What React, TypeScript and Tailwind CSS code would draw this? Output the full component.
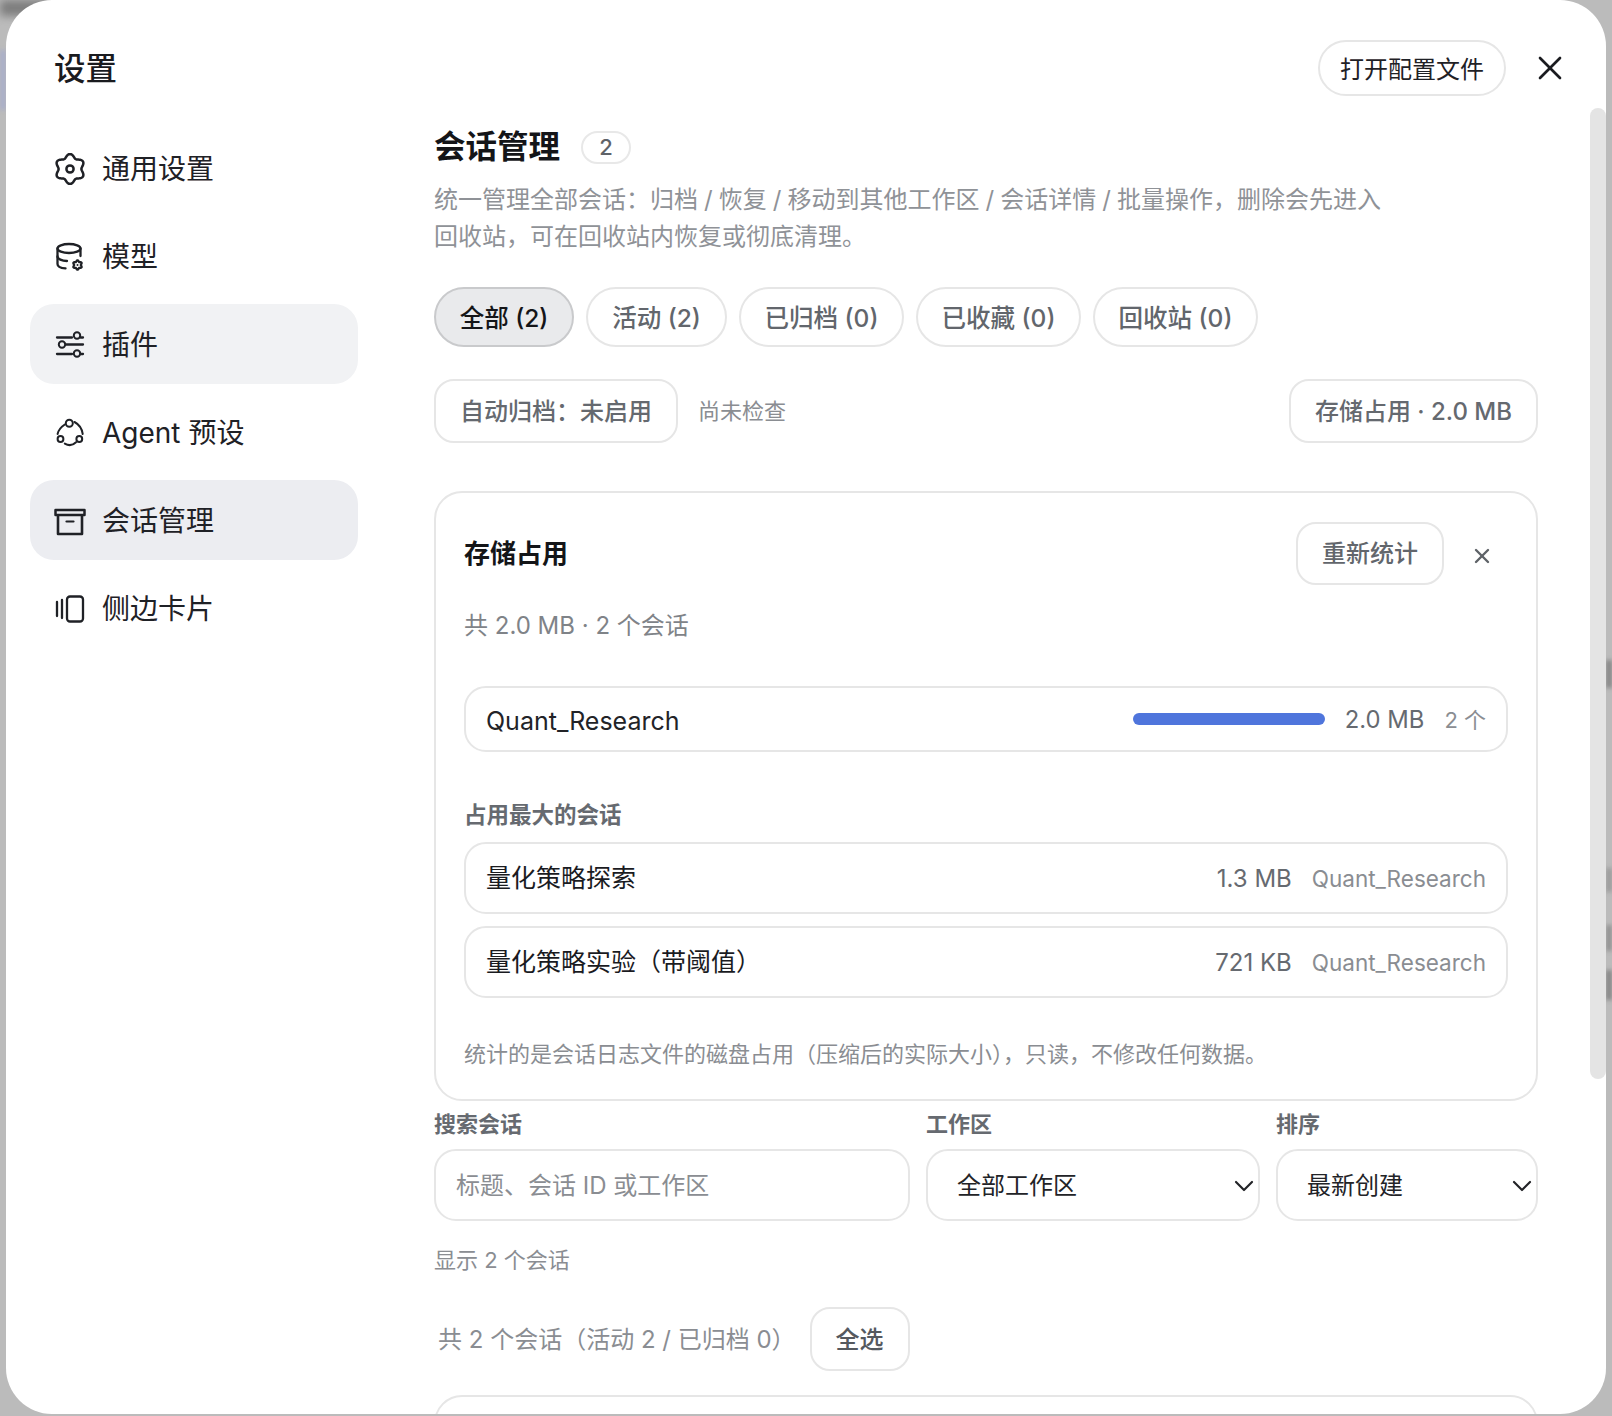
import React from "react";
import { ChevronDown, X } from "lucide-react";

const flower = (cx: number, cy: number, base: number, amp: number) => {
  const pts: string[] = [];
  for (let i = 0; i < 96; i++) {
    const t = (i / 96) * Math.PI * 2;
    const r = base + amp * Math.cos(6 * t + Math.PI);
    const a = t - Math.PI / 2;
    pts.push(`${(cx + r * Math.cos(a)).toFixed(2)} ${(cy + r * Math.sin(a)).toFixed(2)}`);
  }
  return "M" + pts.join("L") + "Z";
};

const S = ({ children }: { children: React.ReactNode }) => (
  <svg width="32" height="32" viewBox="0 0 32 32" fill="none" stroke="#1f2126" strokeWidth="2.3" strokeLinecap="round" strokeLinejoin="round">
    {children}
  </svg>
);

const GearIcon = () => (
  <S>
    <path d={flower(16, 16, 13.2, -1.8)} strokeWidth="2.5" />
    <circle cx="16" cy="16" r="3.6" strokeWidth="2.5" />
  </S>
);
const ModelIcon = () => (
  <S>
    <ellipse cx="15" cy="7.5" rx="11.5" ry="4.5" />
    <path d="M3.5 7.5V23c0 2.4 3.4 4.1 8 4.4" />
    <path d="M3.5 15.5c0 2.4 4.4 4.4 9.5 4.5" />
    <path d="M26.5 7.5V15" />
    <path d={flower(23.5, 24, 4, -0.7)} strokeWidth="2.2" />
    <circle cx="23.5" cy="24" r="1" fill="#1f2126" stroke="none" />
  </S>
);
const SlidersIcon = () => (
  <S>
    <path d="M3 8.5H18" />
    <circle cx="23" cy="6.5" r="3.2" strokeWidth="2" />
    <path d="M26.5 8.5H29" />
    <circle cx="8" cy="15.5" r="3.2" strokeWidth="2" />
    <path d="M12 15.5H29" />
    <path d="M3 25H18" />
    <circle cx="23" cy="24.5" r="3.2" strokeWidth="2" />
    <path d="M26.5 25H29" />
  </S>
);
const AgentIcon = () => (
  <S>
    <circle cx="15.3" cy="6.3" r="3.5" strokeWidth="2" />
    <circle cx="6.5" cy="22" r="2.9" strokeWidth="2" />
    <circle cx="25.3" cy="22" r="2.9" strokeWidth="2" />
    <path d="M20.5 5c4.2 2.2 7.4 6.6 8.2 12" strokeWidth="2" />
    <path d="M10.8 7.5c-3.4 2.2-6.4 5.6-7.2 9.5" strokeWidth="2" />
    <path d="M22 25.2c-3.4 3.4-7.5 3.6-11.2 1.4" strokeWidth="2" />
  </S>
);
const ArchiveIcon = () => (
  <S>
    <rect x="1.5" y="5" width="29" height="5" strokeWidth="2.5" />
    <path d="M4 10V29H28V10" strokeWidth="2.6" strokeLinecap="butt" />
    <path d="M12.5 16.5H19.5" strokeWidth="2.2" />
  </S>
);
const CardIcon = () => (
  <S>
    <path d="M3 9V23" />
    <path d="M8 7V25" />
    <rect x="13" y="3.5" width="16" height="25" rx="3" />
  </S>
);

const nav = [
  { label: "通用设置", icon: <GearIcon />, bg: "" },
  { label: "模型", icon: <ModelIcon />, bg: "" },
  { label: "插件", icon: <SlidersIcon />, bg: "bg-[#f1f2f4]" },
  { label: "Agent 预设", icon: <AgentIcon />, bg: "" },
  { label: "会话管理", icon: <ArchiveIcon />, bg: "bg-[#ecedf1]" },
  { label: "侧边卡片", icon: <CardIcon />, bg: "" },
];

const tabs = ["活动 (2)", "已归档 (0)", "已收藏 (0)", "回收站 (0)"];

export default function App() {
  return (
    <div className="relative w-[1612px] h-[1416px] overflow-hidden bg-[#bbbbbb] font-['Inter','Noto_Sans_CJK_SC',sans-serif] text-[#1f2126]">
      <div className="absolute left-0 top-0 h-[16px] w-[50px] bg-[#7d7d7d] blur-[4px]" />
      <div className="absolute left-0 top-[50px] h-[60px] w-[6px] bg-[#a9aec9] blur-[2px]" />
      <div className="absolute right-0 top-[660px] h-[28px] w-[6px] bg-[#858585] blur-[2px]" />
      <div className="absolute right-0 top-[868px] h-[24px] w-[6px] bg-[#9a9a9a] blur-[2px]" />
      <div className="absolute right-0 top-[925px] h-[26px] w-[6px] bg-[#929292] blur-[2px]" />
      <div className="absolute right-0 top-[970px] h-[30px] w-[6px] bg-[#858585] blur-[2px]" />

      <div className="relative ml-[6px] flex h-[1414px] w-[1600px] overflow-hidden rounded-[46px] bg-white">
        <aside className="flex w-[428px] shrink-0 flex-col pl-[24px]">
          <h1 className="ml-[24px] mt-[48px] h-[42px] text-[31.5px] leading-[42px] font-medium text-[#1a1b1f]">设置</h1>
          <nav className="mt-[38px] flex w-[328px] flex-col gap-[8px]">
            {nav.map((n) => (
              <div key={n.label} className={`flex h-[80px] items-center gap-[16px] rounded-[24px] pl-[24px] pt-[2px] text-[28px] ${n.bg}`}>
                <span className="flex h-[32px] w-[32px] items-center justify-center">{n.icon}</span>
                <span>{n.label}</span>
              </div>
            ))}
          </nav>
        </aside>

        <main className="flex w-[1104px] shrink-0 flex-col pt-[40px]">
          <div className="flex h-[56px] items-center justify-end">
            <button className="flex h-[56px] w-[188px] items-center justify-center rounded-full border-2 border-[#e6e6e6] pt-[3px] text-[24px]">打开配置文件</button>
            <span className="ml-[28px] -mr-[28px] flex h-[32px] w-[32px] items-center justify-center">
              <X size={40} strokeWidth={1.6} color="#1a1b1f" className="shrink-0" />
            </span>
          </div>

          <div className="mt-[31px] flex h-[40px] items-center gap-[21px]">
            <h2 className="text-[31.5px] font-semibold leading-[40px] text-[#141518]">会话管理</h2>
            <span className="flex h-[33px] w-[50px] items-center justify-center rounded-full border-2 border-[#e8e8e8] text-[22px] font-medium text-[#5f6368]">2</span>
          </div>
          <p className="mt-[14px] w-[960px] text-[24px] leading-[37px] text-[#8f9297] [word-spacing:-0.7px]">
            统一管理全部会话：归档 / 恢复 / 移动到其他工作区 / 会话详情 / 批量操作，删除会先进入回收站，可在回收站内恢复或彻底清理。
          </p>

          <div className="mt-[32px] flex h-[60px] gap-[12px]">
            <button className="flex h-[60px] w-[140px] items-center justify-center rounded-full border-2 border-[#c9cacc] bg-[#e9eaec] pt-[2px] text-[24.5px] font-medium text-[#141518]">全部 (2)</button>
            {tabs.map((t, i) => (
              <button key={t} className={`flex h-[60px] items-center justify-center rounded-full border-2 border-[#e6e6e6] pt-[2px] text-[24.5px] font-medium text-[#62666c] ${i === 0 ? "w-[141px]" : "w-[165px]"}`}>{t}</button>
            ))}
          </div>

          <div className="mt-[32px] flex h-[64px] items-center">
            <div className="flex h-[64px] w-[244px] items-center justify-center rounded-[20px] border-2 border-[#e6e6e6] pt-[2px] text-[24px] font-medium text-[#65696f]">自动归档：未启用</div>
            <span className="ml-[20px] pt-[1px] text-[22px] text-[#8a8d92]">尚未检查</span>
            <div className="ml-auto flex h-[64px] w-[249px] items-center justify-center rounded-[20px] border-2 border-[#e6e6e6] pt-[2px] text-[24px] font-medium text-[#65696f]">存储占用 · 2.0 MB</div>
          </div>

          <section className="mt-[48px] rounded-[28px] border-2 border-[#e6e6e6] px-[28px] pb-[30px] pt-[29px]">
            <div className="flex h-[62px] items-center justify-between">
              <h3 className="text-[26px] font-semibold text-[#141518]">存储占用</h3>
              <div className="flex items-center gap-[20px]">
                <button className="flex h-[63px] w-[148px] items-center justify-center rounded-[20px] border-2 border-[#e6e6e6] pt-[2px] text-[24px] font-medium text-[#62666c]">重新统计</button>
                <span className="mr-[8px] mt-[6px] flex h-[36px] w-[36px] items-center justify-center">
                  <X size={24} strokeWidth={2.4} color="#5f6368" />
                </span>
              </div>
            </div>
            <p className="mt-[27px] h-[30px] text-[24px] leading-[30px] text-[#7f8388]">共 2.0 MB · 2 个会话</p>

            <div className="mt-[45px] flex h-[66px] items-center rounded-[22px] border-2 border-[#e6e6e6] pl-[20px] pr-[20px] pt-[2px]">
              <span className="pt-[3px] text-[25px] text-[#222327]">Quant_Research</span>
              <span className="ml-auto -mt-[2px] h-[12px] w-[192px] rounded-full bg-[#4f75dc]" />
              <span className="ml-[20px] text-[23.8px] text-[#666a70]">2.0 MB</span>
              <span className="ml-[20px] text-[22px] text-[#8a8d92]">2 个</span>
            </div>

            <h4 className="mt-[48px] h-[30px] text-[22.5px] font-semibold leading-[30px] text-[#666a70]">占用最大的会话</h4>
            <div className="mt-[12px] flex flex-col gap-[12px]">
              {[
                ["量化策略探索", "1.3 MB"],
                ["量化策略实验（带阈值）", "721 KB"],
              ].map(([name, size]) => (
                <div key={name} className="flex h-[72px] items-center rounded-[22px] border-2 border-[#e6e6e6] px-[20px] pt-[1px]">
                  <span className="text-[25px] text-[#1a1b1f]">{name}</span>
                  <span className="ml-auto text-[24px] text-[#666a70]">{size}</span>
                  <span className="ml-[20px] text-[22.5px] text-[#8a8d92]">Quant_Research</span>
                </div>
              ))}
            </div>
            <p className="mt-[41px] h-[30px] text-[22px] leading-[30px] text-[#8a8d92]">统计的是会话日志文件的磁盘占用（压缩后的实际大小），只读，不修改任何数据。</p>
          </section>

          <div className="mt-[8px] grid grid-cols-[476px_334px_262px] gap-x-[16px]">
            {["搜索会话", "工作区", "排序"].map((l) => (
              <label key={l} className="h-[30px] text-[22px] font-semibold leading-[30px] text-[#666a70]">{l}</label>
            ))}
            <input
              placeholder="标题、会话 ID 或工作区"
              className="mt-[10px] h-[72px] rounded-[22px] border-2 border-[#e6e6e6] px-[20px] text-[24px] outline-none placeholder:text-[#8a8d92]"
            />
            <div className="mt-[10px] flex h-[72px] items-center justify-between rounded-[22px] border-2 border-[#e6e6e6] pl-[29px] pr-0 pt-[1px] text-[24px] text-[#222327]">
              <span>全部工作区</span>
              <ChevronDown size={32} strokeWidth={1.6} className="-mr-[2px]" />
            </div>
            <div className="mt-[10px] flex h-[72px] items-center justify-between rounded-[22px] border-2 border-[#e6e6e6] pl-[29px] pr-0 pt-[1px] text-[24px] text-[#222327]">
              <span>最新创建</span>
              <ChevronDown size={32} strokeWidth={1.6} className="-mr-[2px]" />
            </div>
          </div>

          <p className="mt-[24px] h-[30px] text-[22px] leading-[30px] text-[#8a8d92]">显示 2 个会话</p>

          <div className="mt-[32px] flex h-[64px] items-center pl-[4px]">
            <span className="pt-[1px] text-[24px] text-[#8a8d92]">共 2 个会话（活动 2 / 已归档 0）</span>
            <button className="ml-[14px] flex h-[64px] w-[100px] items-center justify-center rounded-[20px] border-2 border-[#e6e6e6] pt-[2px] text-[24px] font-medium text-[#55595f]">全选</button>
          </div>

          <div className="mt-[24px] h-[80px] shrink-0 rounded-[28px] border-2 border-[#e6e6e6]" />
        </main>

        <div className="absolute right-0 top-[108px] h-[971px] w-[16px] rounded-full bg-[#e4e4e4]" />
      </div>
    </div>
  );
}
